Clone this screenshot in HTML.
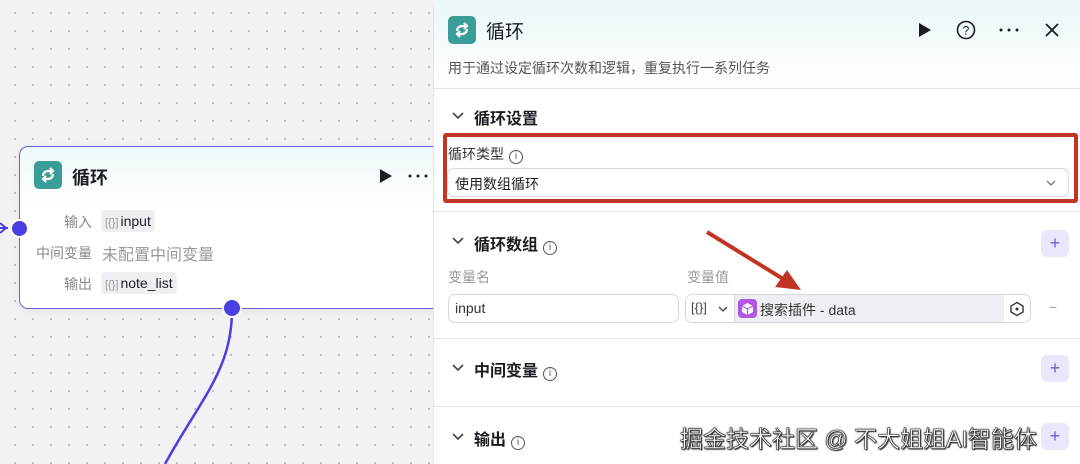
<!DOCTYPE html><html><head><meta charset="utf-8"><style>
*{box-sizing:border-box;margin:0;padding:0}
body{width:1080px;height:464px;overflow:hidden;position:relative;font-family:"Liberation Sans","Noto Sans CJK SC",sans-serif;background:#f2f2f4;background-image:radial-gradient(circle,#b8b8c0 0.9px,transparent 1.2px);background-size:18px 18px;background-position:6px 4px;color:#1c1d23}
.a{position:absolute;white-space:nowrap}
.node{position:absolute;left:19px;top:146px;width:440px;height:163px;border:1.5px solid #6a5fd8;border-radius:9px;background:linear-gradient(#eef8fb,#fff 40%);box-shadow:0 2px 8px rgba(0,0,0,.06)}
.ic{position:absolute;background:#3a9d99;border-radius:5px}
.tag{position:absolute;background:#eeeff3;border-radius:4px;height:22px;font-size:14px;line-height:22px;padding:0 4px;color:#1c1d23}
.tag i{font-style:normal;color:#999;font-size:11px;margin-right:2px}
.lbl{position:absolute;font-size:14px;color:#888;text-align:right;width:72px}
.panel{position:absolute;left:433px;top:0;width:647px;height:464px;background:#fff;border-left:1px solid #e4e4e8;border-radius:8px 0 0 0}
.hd{position:absolute;left:0;top:0;width:647px;height:88px;background:linear-gradient(#eaf6f8,#fff)}
.hr{position:absolute;left:0;width:647px;height:1px;background:#e3e3e8}
.sec{position:absolute;font-size:16px;font-weight:bold;left:40px}
.chev{position:absolute;left:18px}
.plus{position:absolute;left:607px;width:28px;height:27px;border-radius:6px;background:#e8e7fb;color:#6a5fd8;text-align:center;line-height:26px;font-size:18px}
.box{position:absolute;border:1px solid #d6d6de;border-radius:7px;background:#fff}
.info{display:inline-block;width:14px;height:14px;border:1.3px solid #555;border-radius:50%;font-size:10px;line-height:12px;text-align:center;font-weight:normal;vertical-align:0px;margin-left:5px;color:#555}
</style></head><body>
<svg class="a" style="left:0;top:0" width="440" height="464">
<path d="M232 310 C232 370 200 400 165 464" stroke="#4a3fe0" stroke-width="2.5" fill="none"/>
<path d="M0 223 L6 228 L0 233 M0 228 L8 228" stroke="#4a3fe0" stroke-width="2" fill="none"/>
</svg>
<div class="node">
<div class="ic" style="left:14px;top:14px;width:28px;height:28px"><svg width="28" height="28"><path d="M9 15a5 5 0 0 1 5-5h4M19 13a5 5 0 0 1-5 5h-4" stroke="#fff" stroke-width="2.2" fill="none"/><path d="M16 7l3 3-3 3M12 15l-3 3 3 3" stroke="#fff" stroke-width="2.2" fill="none"/></svg></div>
<div class="a" style="left:52px;top:17px;font-size:18px;font-weight:bold">循环</div>
<svg class="a" style="left:359px;top:21px" width="14" height="16"><path d="M1 1L13 8L1 15Z" fill="#1c1d23"/></svg>
<svg class="a" style="left:388px;top:27px" width="24" height="4"><circle cx="2" cy="2" r="1.5" fill="#1c1d23"/><circle cx="10" cy="2" r="1.5" fill="#1c1d23"/><circle cx="18" cy="2" r="1.5" fill="#1c1d23"/></svg>
<div class="lbl" style="left:0;top:65px">输入</div>
<div class="tag" style="left:81px;top:63px"><i>[{}]</i>input</div>
<div class="lbl" style="left:0;top:96px">中间变量</div>
<div class="a" style="left:82px;top:94px;font-size:16px;color:#999">未配置中间变量</div>
<div class="lbl" style="left:0;top:127px">输出</div>
<div class="tag" style="left:81px;top:125px"><i>[{}]</i>note_list</div>
</div>
<div class="a" style="left:10px;top:219px;width:19px;height:19px;border-radius:50%;background:#4a3fe0;border:2px solid #fff"></div>
<div class="a" style="left:222px;top:298px;width:20px;height:20px;border-radius:50%;background:#4a3fe0;border:2px solid #fff"></div>

<div class="panel">
<div class="hd"></div>
<div class="ic" style="left:14px;top:16px;width:28px;height:28px"><svg width="28" height="28"><path d="M9 15a5 5 0 0 1 5-5h4M19 13a5 5 0 0 1-5 5h-4" stroke="#fff" stroke-width="2.2" fill="none"/><path d="M16 7l3 3-3 3M12 15l-3 3 3 3" stroke="#fff" stroke-width="2.2" fill="none"/></svg></div>
<div class="a" style="left:52px;top:17px;font-size:19px">循环</div>
<svg class="a" style="left:484px;top:22px" width="14" height="16"><path d="M1 1L13 8L1 15Z" fill="#1c1d23"/></svg>
<svg class="a" style="left:522px;top:20px" width="20" height="20"><circle cx="10" cy="10" r="8.5" stroke="#1c1d23" stroke-width="1.6" fill="none"/><text x="10" y="14.5" font-size="12" text-anchor="middle" font-family="Liberation Sans" fill="#1c1d23">?</text></svg>
<svg class="a" style="left:565px;top:28px" width="24" height="4"><circle cx="2" cy="2" r="1.5" fill="#1c1d23"/><circle cx="10" cy="2" r="1.5" fill="#1c1d23"/><circle cx="18" cy="2" r="1.5" fill="#1c1d23"/></svg>
<svg class="a" style="left:611px;top:23px" width="14" height="14"><path d="M1 1L13 13M13 1L1 13" stroke="#1c1d23" stroke-width="1.8"/></svg>
<div class="a" style="left:14px;top:58px;font-size:14px;color:#555">用于通过设定循环次数和逻辑，重复执行一系列任务</div>
<div class="hr" style="top:88px"></div>
<svg class="chev" style="top:112px" width="12" height="8"><path d="M1 1L6 6L11 1" stroke="#444" stroke-width="1.6" fill="none"/></svg><div class="sec" style="top:105px">循环设置</div>
<div class="a" style="left:9px;top:133px;width:635px;height:70px;border:4px solid #c23525;border-radius:3px"></div>
<div class="a" style="left:14px;top:144px;font-size:14px;color:#333">循环类型<span class="info" style="color:#555">i</span></div>
<div class="box" style="left:13px;top:168px;width:622px;height:29px"><span class="a" style="left:7px;top:5px;font-size:14px">使用数组循环</span><svg class="a" style="left:598px;top:11px" width="10" height="7"><path d="M1 1L5 5L9 1" stroke="#777" stroke-width="1.3" fill="none"/></svg></div>
<div class="hr" style="top:211px"></div>
<svg class="chev" style="top:237px" width="12" height="8"><path d="M1 1L6 6L11 1" stroke="#444" stroke-width="1.6" fill="none"/></svg><div class="sec" style="top:231px">循环数组<span class="info">i</span></div>
<div class="plus" style="top:230px">+</div>
<div class="a" style="left:14px;top:267px;font-size:14px;color:#999">变量名</div>
<div class="a" style="left:253px;top:267px;font-size:14px;color:#999">变量值</div>
<div class="box" style="left:14px;top:294px;width:231px;height:29px"><span class="a" style="left:6px;top:5px;font-size:14px;color:#333">input</span></div>
<div class="box" style="left:251px;top:294px;width:346px;height:29px;overflow:hidden">
<span class="a" style="left:5px;top:5px;font-size:13px;color:#444">[{}]</span>
<svg class="a" style="left:32px;top:11px" width="10" height="7"><path d="M1 1L5 5L9 1" stroke="#444" stroke-width="1.3" fill="none"/></svg>
<div class="a" style="left:48px;top:0;width:270px;height:27px;background:#eeeff4;border-left:1px solid #d6d6de"></div>
<div class="a" style="left:52px;top:4px;width:19px;height:19px;background:#b057e6;border-radius:4px"><svg width="19" height="19"><path d="M9.5 4L15 7v6l-5.5 3L4 13V7Z" fill="#fff"/><path d="M4 7l5.5 3 5.5-3M9.5 10v6" stroke="#b057e6" stroke-width="1.2" fill="none"/></svg></div>
<span class="a" style="left:74px;top:5px;font-size:14px;color:#333">搜索插件 - data</span>
<svg class="a" style="left:323px;top:6px" width="16" height="16"><path d="M8 1.5L14 5v6l-6 3.5L2 11V5Z" stroke="#333" stroke-width="1.4" fill="none"/><circle cx="8" cy="8" r="1.5" fill="#333"/></svg>
</div>
<div class="a" style="left:615px;top:299px;font-size:14px;color:#999">−</div>
<div class="hr" style="top:338px"></div>
<svg class="chev" style="top:364px" width="12" height="8"><path d="M1 1L6 6L11 1" stroke="#444" stroke-width="1.6" fill="none"/></svg><div class="sec" style="top:357px">中间变量<span class="info">i</span></div>
<div class="plus" style="top:355px">+</div>
<div class="hr" style="top:406px"></div>
<svg class="chev" style="top:433px" width="12" height="8"><path d="M1 1L6 6L11 1" stroke="#444" stroke-width="1.6" fill="none"/></svg><div class="sec" style="top:426px">输出<span class="info">i</span></div>
<div class="plus" style="top:423px">+</div>
</div>
<svg class="a" style="left:0;top:0" width="1080" height="464">
<path d="M707 232 L788 282" stroke="#c23525" stroke-width="4"/>
<path d="M801 290 L775 287 L787 270Z" fill="#c23525"/>
</svg>
<div class="a" style="left:680px;top:420px;font-size:23px;color:#fff;-webkit-text-stroke:0.6px #333;text-shadow:0 0 2px #333,1px 1px 1px #333">掘金技术社区 @ 不大姐姐AI智能体</div>
</body></html>
